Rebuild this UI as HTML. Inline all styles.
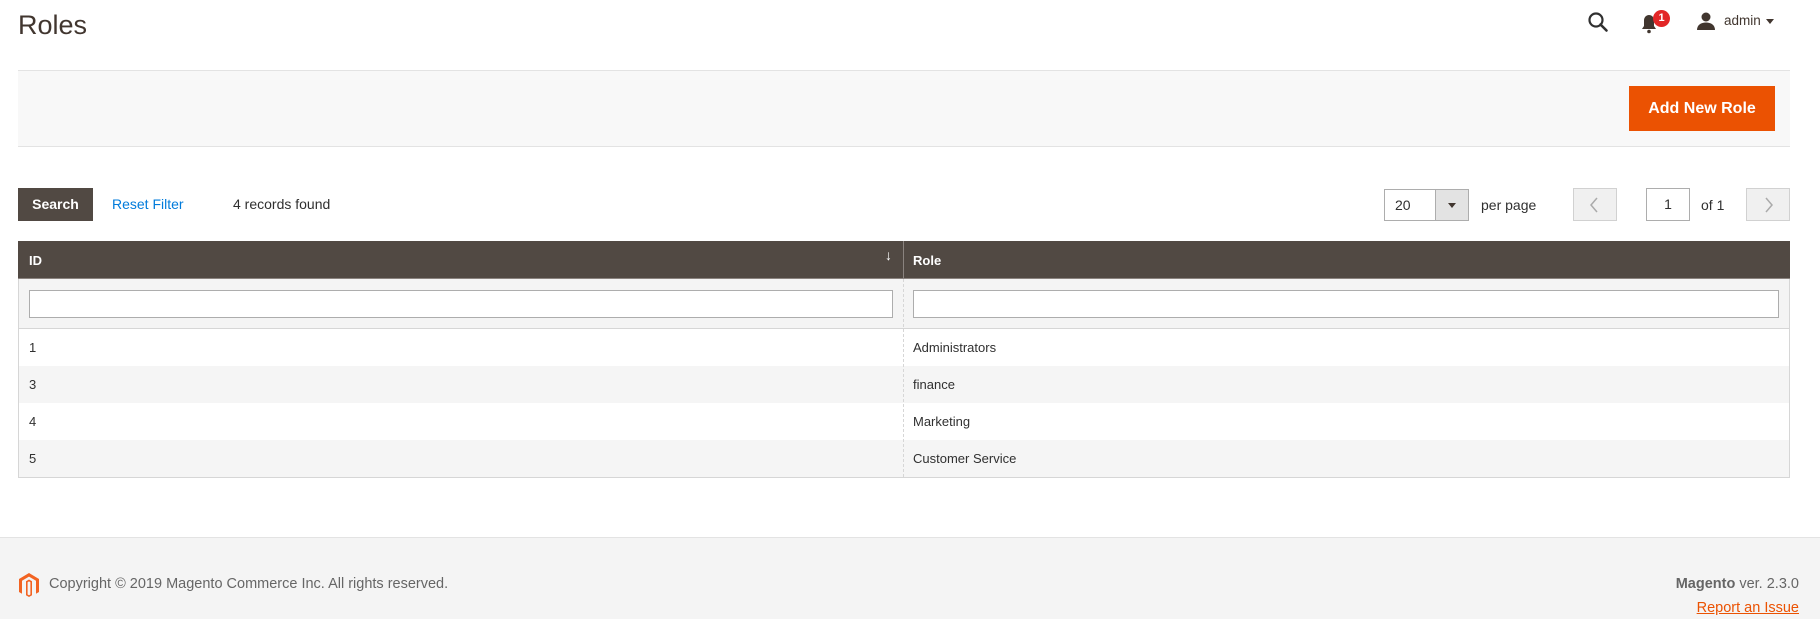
<!DOCTYPE html>
<html><head><meta charset="utf-8"><style>
*{margin:0;padding:0;box-sizing:border-box}
body{width:1820px;height:619px;position:relative;background:#fff;font-family:"Liberation Sans",sans-serif;font-size:14px;color:#303030;overflow:hidden}
.a{position:absolute}
.t{line-height:1}
</style></head><body>
<div class="a t" style="left:18px;top:12px;font-size:27px;color:#41362f">Roles</div>

<svg class="a" style="left:1587px;top:11px" width="22" height="22" viewBox="0 0 22 22"><circle cx="9" cy="9" r="6.5" fill="none" stroke="#303030" stroke-width="2.2"/><line x1="13.5" y1="13.5" x2="19.5" y2="19.5" stroke="#303030" stroke-width="2.6" stroke-linecap="round"/></svg>
<svg class="a" style="left:1641px;top:14px" width="16" height="20" viewBox="0 0 16 20"><path d="M8 1c-3 0-5 2.5-5 5.5V12L1 15h14l-2-3V6.5C13 3.5 11 1 8 1z" fill="#41362f"/><circle cx="8" cy="17.5" r="1.8" fill="#41362f"/></svg>
<div class="a" style="left:1653px;top:10px;width:17px;height:17px;border-radius:50%;background:#e22626;color:#fff;font-size:11px;font-weight:bold;text-align:center;line-height:17px">1</div>
<svg class="a" style="left:1696px;top:12px" width="20" height="18" viewBox="0 0 20 18"><circle cx="10" cy="5" r="4.5" fill="#41362f"/><path d="M1 18c0-5 4-7.5 9-7.5s9 2.5 9 7.5z" fill="#41362f"/></svg>
<div class="a t" style="left:1724px;top:14px;font-size:13.5px;color:#41362f">admin</div>
<div class="a" style="left:1766px;top:19px;border-left:4px solid transparent;border-right:4px solid transparent;border-top:5px solid #41362f"></div>

<div class="a" style="left:18px;top:70px;width:1772px;height:77px;background:#f8f8f8;border-top:1px solid #e3e3e3;border-bottom:1px solid #e3e3e3"></div>
<div class="a" style="left:1629px;top:86px;width:146px;height:45px;background:#eb5202;color:#fff;font-weight:bold;font-size:16px;text-align:center;line-height:45px">Add New Role</div>

<div class="a" style="left:18px;top:188px;width:75px;height:33px;background:#514943;color:#fff;font-weight:bold;font-size:14px;text-align:center;line-height:33px">Search</div>
<div class="a t" style="left:112px;top:197px;color:#007bdb;font-size:14px">Reset Filter</div>
<div class="a t" style="left:233px;top:197px;color:#303030;font-size:14px">4 records found</div>

<div class="a" style="left:1384px;top:189px;width:85px;height:32px;border:1px solid #adadad;background:#fff"></div>
<div class="a" style="left:1435px;top:190px;width:33px;height:30px;background:#e3e3e3;border-left:1px solid #adadad"></div>
<div class="a" style="left:1448px;top:203px;border-left:4px solid transparent;border-right:4px solid transparent;border-top:5px solid #41362f"></div>
<div class="a t" style="left:1395px;top:198px;font-size:14px">20</div>
<div class="a t" style="left:1481px;top:198px;font-size:14px;color:#303030">per page</div>
<div class="a" style="left:1573px;top:188px;width:44px;height:33px;background:#f0f0f0;border:1px solid #d1d1d1"></div>
<svg class="a" style="left:1589px;top:197px" width="10" height="16" viewBox="0 0 10 16"><path d="M8 1L2 8l6 7" fill="none" stroke="#aaa" stroke-width="1.5"/></svg>
<div class="a" style="left:1646px;top:188px;width:44px;height:33px;border:1px solid #adadad;text-align:center;line-height:31px;font-size:14px">1</div>
<div class="a t" style="left:1701px;top:198px;font-size:14px">of 1</div>
<div class="a" style="left:1746px;top:188px;width:44px;height:33px;background:#f0f0f0;border:1px solid #d1d1d1"></div>
<svg class="a" style="left:1764px;top:197px" width="10" height="16" viewBox="0 0 10 16"><path d="M2 1l6 7-6 7" fill="none" stroke="#aaa" stroke-width="1.5"/></svg>

<div class="a" style="left:18px;top:241px;width:1772px;height:38px;background:#514943;border-bottom:1px solid #8a837f"></div>
<div class="a" style="left:903px;top:241px;width:1px;height:38px;background:#8a837f"></div>
<div class="a t" style="left:29px;top:254px;color:#fff;font-weight:bold;font-size:13px">ID</div>
<div class="a t" style="left:913px;top:254px;color:#fff;font-weight:bold;font-size:13px">Role</div>
<div class="a t" style="left:885px;top:248px;color:#fff;font-size:14px">↓</div>

<div class="a" style="left:18px;top:279px;width:1772px;height:50px;background:#f4f4f4;border-bottom:1px solid #d6d6d6;border-left:1px solid #d6d6d6;border-right:1px solid #d6d6d6"></div>
<div class="a" style="left:29px;top:290px;width:864px;height:28px;background:#fff;border:1px solid #adadad"></div>
<div class="a" style="left:913px;top:290px;width:866px;height:28px;background:#fff;border:1px solid #adadad"></div>

<div class="a" style="left:18px;top:329px;width:1772px;height:149px;border:1px solid #d6d6d6;border-top:none">
 <div style="height:37px;background:#fff"></div>
 <div style="height:37px;background:#f5f5f5"></div>
 <div style="height:37px;background:#fff"></div>
 <div style="height:37px;background:#f5f5f5"></div>
</div>
<div class="a" style="left:903px;top:279px;height:198px;border-left:1px dashed #d6d6d6"></div>
<div class="a t" style="left:29px;top:341px;font-size:13px">1</div>
<div class="a t" style="left:913px;top:341px;font-size:13px">Administrators</div>
<div class="a t" style="left:29px;top:378px;font-size:13px">3</div>
<div class="a t" style="left:913px;top:378px;font-size:13px">finance</div>
<div class="a t" style="left:29px;top:415px;font-size:13px">4</div>
<div class="a t" style="left:913px;top:415px;font-size:13px">Marketing</div>
<div class="a t" style="left:29px;top:452px;font-size:13px">5</div>
<div class="a t" style="left:913px;top:452px;font-size:13px">Customer Service</div>

<div class="a" style="left:0;top:537px;width:1820px;height:82px;background:#f4f4f4;border-top:1px solid #e3e3e3"></div>
<svg class="a" style="left:19px;top:573px" width="20" height="24" viewBox="0 0 20 24"><path d="M10 0L0 6v13l3 1.7V7.8L10 3.6l7 4.2v12.9L20 19V6z" fill="#f26322"/><path d="M10 6.5L7 8.3v14l3 1.7 3-1.7V8.3zM8.6 9.2L10 8.4l1.4.8v12.3L10 22.3l-1.4-.8z" fill="#f26322"/></svg>
<div class="a t" style="left:49px;top:577px;font-size:14.5px;color:#666">Copyright © 2019 Magento Commerce Inc. All rights reserved.</div>
<div class="a t" style="right:21px;top:577px;font-size:14.5px;color:#666;text-align:right"><b>Magento</b> ver. 2.3.0</div>
<div class="a t" style="right:21px;top:601px;font-size:14.5px;color:#eb5202;text-decoration:underline">Report an Issue</div>
</body></html>
